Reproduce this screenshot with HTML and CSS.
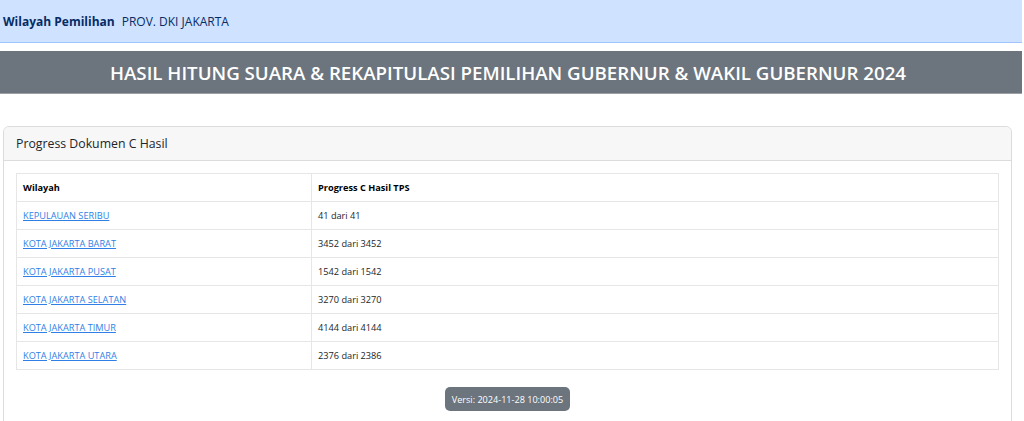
FILE: index.html
```html
<!DOCTYPE html>
<html lang="id">
<head>
<meta charset="utf-8">
<link rel="stylesheet" href="styles.css">
</head>
<body>
<div class="topbar"><span class="label">Wilayah Pemilihan</span><span class="value">PROV. DKI JAKARTA</span></div>
<div class="titlebar">HASIL HITUNG SUARA &amp; REKAPITULASI PEMILIHAN GUBERNUR &amp; WAKIL GUBERNUR 2024</div>
<div class="card">
  <div class="card-header">Progress Dokumen C Hasil</div>
  <div class="card-body">
    <table class="tbl">
      <thead><tr><th class="c1">Wilayah</th><th>Progress C Hasil TPS</th></tr></thead>
      <tbody>
        <tr><td><a href="#">KEPULAUAN SERIBU</a></td><td>41 dari 41</td></tr>
        <tr><td><a href="#">KOTA JAKARTA BARAT</a></td><td>3452 dari 3452</td></tr>
        <tr><td><a href="#">KOTA JAKARTA PUSAT</a></td><td>1542 dari 1542</td></tr>
        <tr><td><a href="#">KOTA JAKARTA SELATAN</a></td><td>3270 dari 3270</td></tr>
        <tr><td><a href="#">KOTA JAKARTA TIMUR</a></td><td>4144 dari 4144</td></tr>
        <tr><td><a href="#">KOTA JAKARTA UTARA</a></td><td>2376 dari 2386</td></tr>
      </tbody>
    </table>
    <div class="badge-wrap"><span class="badge">Versi: 2024-11-28 10:00:05</span></div>
  </div>
</div>
</body>
</html>
```
FILE: styles.css
```css
html, body { margin: 0; padding: 0; background: #fff; overflow: hidden; }
body { font-family: "Open Sans", "Noto Sans", sans-serif; color: #212529; width: 1022px; height: 421px; }
.topbar {
  height: 42px;
  background: #cfe2ff;
  border-bottom: 1px solid #9ec5fe;
  display: flex;
  align-items: center;
  padding-left: 3px;
  font-size: 12px;
  color: #052c65;
}
.topbar .label { font-weight: 700; margin-right: 7px; }
.titlebar {
  margin-top: 8px;
  height: 42px;
  background: #6c757d;
  color: #fff;
  display: flex;
  align-items: center;
  justify-content: center;
  font-size: 18.7px;
  font-weight: 600;
  border-bottom: 1px solid #9aa0a6;
  padding-right: 6px;
}
.card {
  margin: 32px 10px 0 3px;
  border: 1px solid #dcdcdc;
  border-radius: 6px;
  height: 320px;
}
.card-header {
  height: 33px;
  background: #f7f7f7;
  border-bottom: 1px solid #dcdcdc;
  border-radius: 6px 6px 0 0;
  display: flex;
  align-items: center;
  padding-left: 12px;
  font-size: 12.3px;
  color: #212529;
}
.card-body { padding: 12px 12px 0 12px; }
.tbl {
  width: 100%;
  border-collapse: collapse;
  font-size: 9.2px;
}
.tbl th, .tbl td {
  border: 1px solid #e6e6e6;
  height: 27px;
  padding: 0 6px;
  text-align: left;
  vertical-align: middle;
}
.tbl th { font-weight: 700; color: #000; }
.tbl .c1 { width: 282px; }
.tbl a { color: #2f7fe6; text-decoration: underline; }
.badge-wrap { display: flex; justify-content: center; margin-top: 17px; }
.badge {
  background: #6c757d;
  color: #fff;
  font-size: 9.1px;
  border-radius: 5px;
  padding: 0 7px;
  height: 24px;
  display: flex;
  align-items: center;
}
```
